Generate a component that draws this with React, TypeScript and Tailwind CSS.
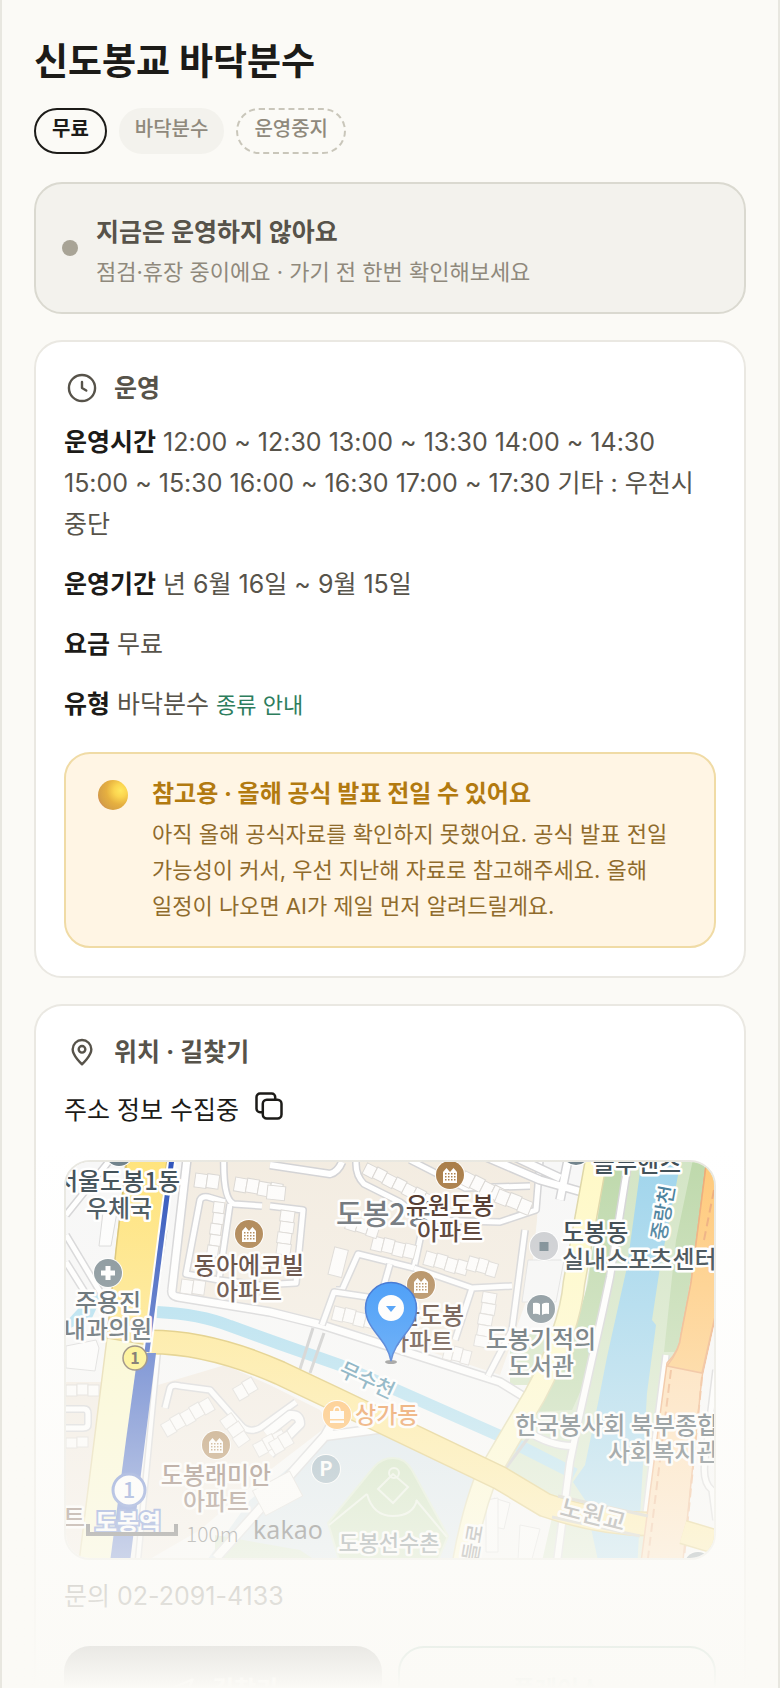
import React from "react";

type Pt = string;

const halo = { paintOrder: "stroke" as const, stroke: "#ffffff", strokeWidth: 5, strokeLinejoin: "round" as const };

function Road({ d, w = 7, fill = "#ffffff", edge = "#d2d2d4" }: { d: Pt; w?: number; fill?: string; edge?: string }) {
  return (
    <g fill="none" strokeLinejoin="round">
      <path d={d} stroke={edge} strokeWidth={w + 3} />
      <path d={d} stroke={fill} strokeWidth={w} />
    </g>
  );
}

function Houses({ x, y, n, a = 0, w = 12, h = 14 }: { x: number; y: number; n: number; a?: number; w?: number; h?: number }) {
  return (
    <g transform={`translate(${x} ${y}) rotate(${a})`} fill="#fdfcfb" stroke="#d9d6d2" strokeWidth="1">
      {Array.from({ length: n }, (_, i) => (
        <rect key={i} x={i * w} y={i % 2 ? 0 : 1} width={w} height={h} />
      ))}
    </g>
  );
}

function Label({
  x,
  y,
  children,
  fill = "#3b4a52",
  size = 24,
  anchor = "middle",
  rotate = 0,
}: {
  x: number;
  y: number;
  children: React.ReactNode;
  fill?: string;
  size?: number;
  anchor?: "start" | "middle" | "end";
  rotate?: number;
}) {
  return (
    <text x={x} y={y} fill={fill} fontSize={size} fontWeight={500} textAnchor={anchor} transform={`rotate(${rotate} ${x} ${y})`} {...halo}>
      {children}
    </text>
  );
}

function Dot({ x, y, fill, children }: { x: number; y: number; fill: string; children?: React.ReactNode }) {
  return (
    <g transform={`translate(${x} ${y})`}>
      <circle r="15" fill="#fff" />
      <circle r="14" fill={fill} />
      {children}
    </g>
  );
}

function Apartment({ x, y }: { x: number; y: number }) {
  return (
    <Dot x={x} y={y} fill="#a87b45">
      <path d="M-7 8V-3l3.500-4 3.500 4 3.500-4 3.500 4V8z" fill="#fff" />
      <g fill="#a87b45">
        {[-2, 1, 4].map((r) => [-5, -2, 1, 4].map((c) => <rect key={`${r}${c}`} x={c} y={r} width="1.500" height="1.500" />))}
      </g>
    </Dot>
  );
}

function MapDrawing() {
  return (
    <svg
      viewBox="66 1162 648 396"
      preserveAspectRatio="xMidYMid slice"
      className="block h-full w-full font-['Noto_Sans_CJK_KR',sans-serif]"
      role="img"
      aria-label="신도봉교 바닥분수 주변 지도"
    >
      <rect x="60" y="1150" width="670" height="420" fill="#f7f7f7" />
      {/* residential blocks */}
      <path d="M183 1150H540L537 1220 530 1290 500 1375 410 1345 270 1308 172 1292z" fill="#f3ece1" />
      <path d="M158 1385L225 1365 272 1386 320 1410 330 1424 270 1470 200 1530 150 1559H136z" fill="#f1e9df" />
      <path d="M60 1382H104L84 1559H60z" fill="#f1e9df" />
      <path d="M510 1340L545 1330 552 1345 530 1385 510 1385z" fill="#cfe2bd" />
      {/* school and sports ground */}
      <path d="M325 1438L378 1432 480 1478 465 1570H200L250 1500z" fill="#d5e3eb" />
      <path d="M215 1535L300 1550 330 1570H215z" fill="#cfe2c2" />
      <path d="M393 1458q12 0 19 12l36 66-14 34H342l-14-47 46-56q8-9 19-9z" fill="#c3dcb0" stroke="#d9e8cc" strokeWidth="2" />
      <g fill="none" stroke="#e8f1e0" strokeWidth="2">
        <path d="M367 1494L329 1525M416 1500L447 1537" />
        <path d="M367 1494q6 22 26 22t24-16M378 1489l15-15 15 13-15 16z" />
        <circle cx="394" cy="1473" r="5" />
      </g>
      {/* riverside */}
      <path d="M608 1150H728L714 1200 690 1283 680 1347 667 1367 643 1570H540L556 1500 500 1470 540 1410 578 1340z" fill="#d2e4c4" />
      <path d="M608 1150H628L610 1277 590 1370 572 1410 530 1412 572 1340 588 1283z" fill="#bdd8aa" />
      <path d="M695 1150H728L690 1283 678 1352 664 1352 676 1240z" fill="#bdd8aa" />
      <path d="M643 1150H683L660 1267 652 1320 656 1325 647 1393 637 1570H600L585 1500 573 1482 585 1465 598 1403 607 1357 627 1267z" fill="#9ed4ec" />
      <path d="M66 1322L98 1287 104 1292 92 1318 66 1330z" fill="#a9dcef" />
      <path d="M157 1312Q200 1314 230 1326L280 1344 340 1365 500 1436 575 1474" fill="none" stroke="#a9dcef" strokeWidth="12" />

      {/* local streets */}
      <Road d="M66 1215L110 1160M66 1235L105 1300M66 1262l25 40" w={5} />
      <Road d="M188 1150L172 1290Q171 1296 178 1297L270 1312 322 1325 500 1382 526 1398" w={7} />
      <Road d="M224 1150Q222 1200 234 1204L262 1206M230 1204L219 1280 186 1274 200 1200Q202 1196 208 1197L225 1202" w={5} />
      <Road d="M219 1280L260 1285 296 1283 303 1210 270 1206" w={5} />
      <Road d="M270 1165L330 1174Q338 1172 342 1162" w={6} />
      <Road d="M358 1150Q352 1172 364 1184L400 1202 424 1220 500 1222 536 1210 540 1160" w={5} />
      <Road d="M410 1160L465 1188 530 1186 M424 1220L414 1268 358 1254 342 1290 336 1290" w={5} />
      <Road d="M322 1325L334 1292 414 1304 M390 1264L382 1292M414 1268L472 1288 512 1286M472 1288L455 1340M488 1376L512 1330 525 1230" w={5} />
      <Road d="M470 1150L540 1180 582 1192M568 1160L560 1200M500 1150L560 1178" w={7} />
      <Road d="M165 1408L170 1388Q172 1384 180 1386L210 1390 240 1424Q248 1434 260 1428L296 1402" w={5} />
      <Road d="M216 1558L325 1436 400 1426M270 1454L300 1424Q300 1414 290 1415L266 1434M325 1436L340 1410" w={8} />
      <Road d="M66 1409H84q4 0 4 5v10q0 4-5 4H66" w={5} />
      <Road d="M158 1350L138 1560" w={4} />
      <g stroke="#c4c4c4" strokeWidth="3">
        <path d="M313 1328L300 1369M324 1333L310 1373M523 1404L490 1457M534 1430L506 1468" />
      </g>

      {/* buildings */}
      <Houses x={196} y={1172} n={2} a={8} />
      <Houses x={236} y={1176} n={4} a={10} />
      <Houses x={226} y={1203} n={5} a={98} w={11} h={11} />
      <Houses x={182} y={1278} n={2} a={8} />
      <Houses x={296} y={1212} n={4} a={98} w={11} />
      <Houses x={268} y={1184} n={1} a={6} w={18} />
      <Houses x={368} y={1162} n={7} a={27} w={11} h={12} />
      <Houses x={374} y={1235} n={4} a={14} w={11} />
      <Houses x={348} y={1218} n={3} a={18} w={11} h={10} />
      <Houses x={427} y={1250} n={4} a={16} w={11} />
      <Houses x={470} y={1255} n={3} a={16} w={10} />
      <Houses x={335} y={1305} n={4} a={14} w={11} />
      <Houses x={466} y={1170} n={4} a={27} w={11} />
      <Houses x={500} y={1188} n={3} a={22} w={12} />
      <Houses x={498} y={1294} n={5} a={100} w={11} />
      <Houses x={335} y={1246} n={1} a={14} w={14} h={28} />
      <Houses x={446} y={1344} n={3} a={14} w={9} />
      <Houses x={160} y={1424} n={5} a={-30} w={11} />
      <Houses x={232} y={1388} n={2} a={-30} w={11} />
      <Houses x={232} y={1412} n={3} a={55} w={11} />
      <Houses x={252} y={1444} n={3} a={-28} w={11} />
      <Houses x={268} y={1442} n={2} a={-30} w={11} />
      <Houses x={66} y={1384} n={3} w={11} h={11} />
      <Houses x={66} y={1437} n={2} w={11} h={10} />
      <Houses x={252} y={1490} n={1} a={-28} w={42} h={28} />
      <path d="M66 1346l30-6 3 8-4 23-29-3zM103 1212h14l-6 34h-12z" fill="#fdfdfd" stroke="#d6d6d6" />
      <path d="M528 1260h36l-8 42h-34z" fill="#f6f6f6" stroke="#dedede" />
      <g fill="#fcfcfc" stroke="#d6d6d6">
        <path d="M494 1498l16 5-6 26-14-3zM520 1525l20 4-8 30h-14z" />
        <path d="M486 1500l12-2v54h-12z" />
      </g>

      {/* trunk roads */}
      <path d="M598 1150L574 1283Q570 1330 535 1395L485 1480Q470 1520 462 1570" fill="none" stroke="#ddd5a3" strokeWidth="23" />
      <path d="M598 1150L574 1283Q570 1330 535 1395L485 1480Q470 1520 462 1570" fill="none" stroke="#fff9c6" strokeWidth="20" />
      <Road d="M630 1150L610 1277 603 1310 580 1413 570 1462 556 1570M525 1430Q550 1446 572 1446" w={6} />
      <Road d="M666 1355L650 1480 644 1530" w={5} />
      <path d="M150 1342Q210 1342 280 1373L337 1400 500 1478 545 1505Q600 1524 650 1524L730 1546" fill="none" stroke="#d9be5c" strokeWidth="25" />
      <path d="M150 1342Q210 1342 280 1373L337 1400 500 1478 545 1505Q600 1524 650 1524L730 1546" fill="none" stroke="#ffe68a" strokeWidth="22" />
      <path d="M127 1150H168L150 1342 128 1570H78L107 1338z" fill="#fbf8c8" stroke="#e0d29a" strokeWidth="1.500" />
      <path d="M128 1150H168L148 1345 107 1338 116 1250z" fill="#ffe37a" stroke="#d6bd62" strokeWidth="1.500" />
      <path d="M164 1230L148 1340" stroke="#b9b9bb" strokeWidth="7" />
      <path d="M173 1150L147 1352" stroke="#fff" strokeWidth="9" />
      <path d="M173 1150L147 1352" stroke="#2a50bb" strokeWidth="5" />
      <path d="M138 1353H156L129 1570H109L126 1440z" fill="#385dc2" />
      <path d="M708 1150H730L728 1260 702 1377 682 1570H640L662 1400 667 1363Q680 1350 681 1335L691 1283z" fill="#ffd9a8" stroke="#eda873" strokeWidth="1.500" />
      <path d="M708 1150H730L728 1260 702 1373 667 1366Q680 1350 681 1335L691 1283z" fill="#ffc877" stroke="#eda873" strokeWidth="1.500" />
      <path d="M728 1262L703 1377 684 1570H730V1262z" fill="#f7f7f7" />
      <g fill="none" stroke="#eda873" strokeWidth="2" strokeDasharray="9 5">
        <path d="M714 1190L704 1240M671 1370L648 1558M702 1377L684 1558" />
      </g>
      <Road d="M716 1370L705 1460Q702 1482 712 1490L716 1520" w={5} />
      <path d="M683 1532L730 1546" stroke="#d9be5c" strokeWidth="25" />
      <path d="M683 1532L730 1546" stroke="#ffe68a" strokeWidth="22" />
      <path d="M558 1496L648 1516M552 1517L640 1536" stroke="#c3bfb0" strokeWidth="3" />

      {/* place markers */}
      <Dot x={119} y={1152} fill="#6e8089" />
      <Dot x={576} y={1151} fill="#6e8089" />
      <Dot x={698} y={1566} fill="#6e8089">
        <circle r="6" fill="#fff" />
      </Dot>
      <Dot x={108} y={1273} fill="#76868d">
        <path d="M-2.500-7h5v4.500H7v5H2.500V7h-5V2.500H-7v-5h4.500z" fill="#fff" />
      </Dot>
      <Label x={336} y={1225} anchor="start" size={29} fill="#666c72">도봉2동</Label>
      <Apartment x={249} y={1234} />
      <Apartment x={216} y={1445} />
      <Apartment x={450} y={1175} />
      <Apartment x={421} y={1285} />
      <Dot x={544} y={1246} fill="#c8cace">
        <rect x="-4.500" y="-4" width="9" height="9" fill="#6e8089" />
      </Dot>
      <Dot x={541} y={1309} fill="#72828a">
        <path d="M-8-6q5-1 7 1v11q-3-2-7-1zM8-6q-4-1-7 1v11q3-2 7-1z" fill="#fff" />
      </Dot>
      <Dot x={326} y={1469} fill="#85a2b2">
        <text y="7" fill="#fff" fontSize="20" fontWeight="700" textAnchor="middle">P</text>
      </Dot>
      <Dot x={337} y={1415} fill="#ffb04a">
        <path d="M-7-4H7V4H-7zM-7 5.500H7V8H-7z" fill="#fff" />
        <path d="M-3-4q0-4 3-4t3 4" fill="none" stroke="#fff" strokeWidth="1.500" />
      </Dot>

      <Label x={180} y={1190} anchor="end">서울도봉1동</Label>
      <Label x={119} y={1217}>우체국</Label>
      <Label x={108} y={1311}>주용진</Label>
      <Label x={108} y={1338}>내과의원</Label>
      <Label x={249} y={1274} fill="#452a1d">동아에코빌</Label>
      <Label x={249} y={1300} fill="#452a1d">아파트</Label>
      <Label x={216} y={1484} fill="#6b4c3d">도봉래미안</Label>
      <Label x={216} y={1510} fill="#6b4c3d">아파트</Label>
      <Label x={74} y={1526} fill="#6b4c3d">트</Label>
      <Label x={450} y={1214} fill="#452a1d">유원도봉</Label>
      <Label x={450} y={1240} fill="#452a1d">아파트</Label>
      <Label x={420} y={1324} fill="#452a1d">삼환도봉</Label>
      <Label x={420} y={1350} fill="#452a1d">아파트</Label>
      <Label x={364} y={1387} fill="#4a8aa6" size={21} rotate={25}>무수천</Label>
      <Label x={355} y={1423} anchor="start" fill="#e57a22" size={23}>상가동</Label>
      <Label x={389} y={1551} fill="#4a5a60" size={22}>도봉선수촌</Label>
      <Label x={480} y={1544} fill="#666666" size={20} rotate={-80}>들로</Label>
      <Label x={637} y={1172}>블루핸즈</Label>
      <Label x={670} y={1214} fill="#3c7795" size={20} rotate={-80}>중랑천</Label>
      <Label x={562} y={1241} anchor="start" fill="#26343c">도봉동</Label>
      <Label x={562} y={1268} anchor="start" fill="#26343c">실내스포츠센터</Label>
      <Label x={541} y={1348}>도봉기적의</Label>
      <Label x={541} y={1375}>도서관</Label>
      <Label x={515} y={1434} anchor="start">한국봉사회 북부종합</Label>
      <Label x={608} y={1461} anchor="start">사회복지관</Label>
      <Label x={591} y={1523} fill="#666666" rotate={14}>노원교</Label>

      {/* route shield and station */}
      <circle cx="135" cy="1358" r="12" fill="#ffef6b" stroke="#6b5a48" strokeWidth="1.500" />
      <text x="135" y="1364" fontSize="16" fontWeight="700" fill="#3f3328" textAnchor="middle">1</text>
      <circle cx="129" cy="1490" r="16" fill="#fff" stroke="#4668c4" strokeWidth="3" />
      <text x="129" y="1498" fontSize="22" fontWeight="500" fill="#4668c4" textAnchor="middle">1</text>
      <text x="128" y="1531" fontSize="24" fontWeight="700" fill="#fff" stroke="#4668c4" strokeWidth="4" paintOrder="stroke" textAnchor="middle">도봉역</text>
      <path d="M88 1524V1534H176V1524" fill="none" stroke="#333" strokeWidth="4" />
      <text x="186" y="1542" fontSize="21" fontWeight="300" fill="#333">100m</text>
      <text x="253" y="1539" fontSize="25" fill="#222" fontFamily="Noto Sans">kakao</text>

      {/* selected spot */}
      <ellipse cx="391" cy="1362" rx="6" ry="2" fill="#777" />
      <path d="M391 1361C387 1338 365.500 1330 365.500 1308a25.500 25.500 0 0 1 51 0C416.500 1330 395 1338 391 1361z" fill="#1783f8" stroke="#0c50c8" strokeWidth="1.500" />
      <circle cx="391" cy="1308" r="13" fill="#fff" />
      <path d="M386 1306h10l-5 6z" fill="#1783f8" />
    </svg>
  );
}

function ClockIcon() {
  return (
    <svg viewBox="0 0 24 24" className="size-8" fill="none" stroke="currentColor" strokeWidth="1.800" strokeLinecap="round" strokeLinejoin="round" aria-hidden="true">
      <circle cx="12" cy="12" r="9.800" />
      <path d="M12 7.500V12l3.200 1.900" />
    </svg>
  );
}

function PlaceIcon() {
  return (
    <svg viewBox="0 0 24 24" className="size-8" fill="none" stroke="currentColor" strokeWidth="1.800" strokeLinejoin="round" aria-hidden="true">
      <path d="M12 21.200s7-6.200 7-11.200a7 7 0 1 0-14 0c0 5 7 11.200 7 11.200z" />
      <circle cx="12" cy="10" r="2.500" />
    </svg>
  );
}

function CopyIcon() {
  return (
    <svg viewBox="0 0 28 28" className="size-7" fill="none" stroke="currentColor" strokeWidth="2.500" strokeLinecap="round" strokeLinejoin="round" aria-hidden="true">
      <rect x="7.800" y="7.800" width="18.700" height="18.700" rx="4" />
      <path d="M7.500 20.200H5a3.500 3.500 0 0 1-3.500-3.500V5A3.500 3.500 0 0 1 5 1.500h11.700A3.500 3.500 0 0 1 20.200 5v2.500" />
    </svg>
  );
}

function Orb() {
  return (
    <svg viewBox="0 0 30 30" className="size-[30px]" aria-hidden="true">
      <defs>
        <radialGradient id="orb" cx="0.750" cy="0.350" r="0.850">
          <stop offset="0" stopColor="#ffe75e" />
          <stop offset="0.250" stopColor="#fbd550" />
          <stop offset="0.550" stopColor="#e6b040" />
          <stop offset="0.850" stopColor="#d6a045" />
          <stop offset="1" stopColor="#d0825a" />
        </radialGradient>
      </defs>
      <circle cx="15" cy="15" r="15" fill="url(#orb)" />
    </svg>
  );
}

function Row({ name, children }: { name: string; children: React.ReactNode }) {
  return (
    <p>
      <strong className="font-bold text-[#1c1b18]">{name}</strong> {children}
    </p>
  );
}

export default function App() {
  return (
    <div className="relative h-screen overflow-hidden border-x-2 border-[#e8e7e0] bg-[#fbfaf6] px-8 pt-9 font-['Inter','Noto_Sans_CJK_KR',sans-serif] break-keep text-[#57534a]">
      <header>
        <h1 className="text-[37px] leading-[52px] font-bold text-[#1c1b18]">신도봉교 바닥분수</h1>
        <div className="mt-5 flex gap-3 text-[20px] leading-[30px]">
          <span className="rounded-full border-2 border-[#1c1b18] px-4 pt-1 pb-2 font-bold text-[#1c1b18]">무료</span>
          <span className="rounded-full border-2 border-[#f3f2ed] bg-[#f3f2ed] px-3.5 pt-1 pb-2 font-medium text-[#8f897c]">바닥분수</span>
          <span className="rounded-full border-2 border-dashed border-[#c9c6ba] px-4 pt-1 pb-2 font-medium text-[#8f897c]">운영중지</span>
        </div>
      </header>

      <main className="mt-7 flex flex-col gap-[26px]">
        <section className="flex items-center gap-[18px] rounded-[28px] border-2 border-[#dad9d0] bg-[#f3f2ed] px-[26px] py-6">
          <span className="size-4 rounded-full bg-[#a8a496]" />
          <div>
            <h2 className="text-[25px] leading-[48px] font-bold">지금은 운영하지 않아요</h2>
            <p className="text-[22px] leading-[32px] text-[#8f897c]">점검·휴장 중이에요 · 가기 전 한번 확인해보세요</p>
          </div>
        </section>

        <section className="rounded-[28px] border-2 border-[#eae8e2] bg-white p-7">
          <h2 className="flex items-center gap-4 px-0.5 text-[25px] leading-9 font-bold">
            <ClockIcon />
            운영
          </h2>
          <div className="mt-4 flex flex-col gap-[19px] text-[25px] leading-[41px]">
            <Row name="운영시간">12:00 ~ 12:30 13:00 ~ 13:30 14:00 ~ 14:30 15:00 ~ 15:30 16:00 ~ 16:30 17:00 ~ 17:30 기타 : 우천시 중단</Row>
            <Row name="운영기간">년 6월 16일 ~ 9월 15일</Row>
            <Row name="요금">무료</Row>
            <Row name="유형">
              바닥분수{" "}
              <a href="#types" className="text-[22px] text-[#2d7d5d]">종류 안내</a>
            </Row>
          </div>
          <aside className="mt-[26px] flex gap-6 rounded-[26px] border-2 border-[#f0dba5] bg-[#fff5e4] px-8 pt-5 pb-[22px]">
            <div className="pt-1.5">
              <Orb />
            </div>
            <div>
              <h3 className="text-[24px] leading-10 font-bold text-[#b27a10]">참고용 · 올해 공식 발표 전일 수 있어요</h3>
              <p className="mt-0.5 text-[22px] leading-9 text-[#8f6b2c]">
                아직 올해 공식자료를 확인하지 못했어요. 공식 발표 전일 가능성이 커서, 우선 지난해 자료로 참고해주세요. 올해 일정이 나오면 AI가 제일 먼저 알려드릴게요.
              </p>
            </div>
          </aside>
        </section>

        <section className="rounded-t-[28px] border-2 border-b-0 border-[#eae8e2] bg-white p-7">
          <h2 className="flex items-center gap-4 px-0.5 text-[25px] leading-9 font-bold">
            <PlaceIcon />
            위치 · 길찾기
          </h2>
          <div className="mt-5 flex items-start gap-4 text-[25px] leading-10 text-[#1c1b18]">
            <p>주소 정보 수집중</p>
            <button type="button" aria-label="주소 복사" className="pt-0.5">
              <CopyIcon />
            </button>
          </div>
          <div className="mt-[30px] h-[400px] overflow-hidden rounded-[26px] border-2 border-[#e8e7e0]">
            <MapDrawing />
          </div>
          <p className="mt-4 text-[25px] leading-10">문의 02-2091-4133</p>
          <div className="mt-[30px] grid grid-cols-2 gap-4 text-[24px] leading-9 font-bold">
            <a href="#route" className="flex items-center justify-center gap-4 rounded-[26px] bg-[#1c1b18] py-6 text-white">
              <svg viewBox="0 0 24 24" className="size-7" fill="none" stroke="currentColor" strokeWidth="2" strokeLinejoin="round" aria-hidden="true">
                <path d="M21 3L3 10.500l7.500 3L13.500 21z" />
              </svg>
              길찾기
            </a>
            <a href="#place" className="flex items-center justify-center rounded-[26px] border-2 border-[#2d7d5d] bg-white py-6 text-[#2d7d5d]">
              플레이스
            </a>
          </div>
        </section>
      </main>

      <div className="pointer-events-none absolute -inset-x-0.5 bottom-0 h-[540px] bg-linear-to-b from-[#fbfaf6]/0 to-[#fbfaf6]" />
    </div>
  );
}
